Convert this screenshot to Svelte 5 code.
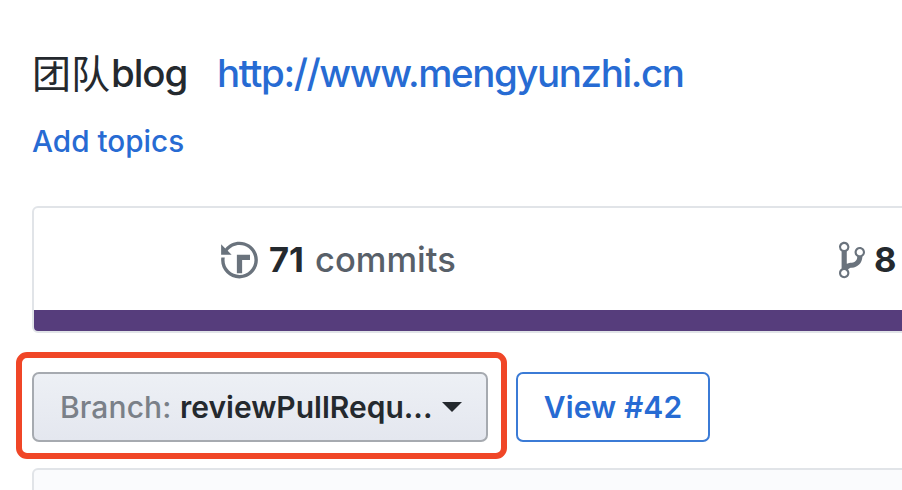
<script>
  const stats = { commits: 71, branches: 8 };
  const branch = 'reviewPullRequ...';
</script>

<main>
  <header>
    <h1><span class="cjk">团队</span><span class="blog">blog</span></h1>
    <a class="site" href="#site">http://www.mengyunzhi.cn</a>
  </header>
  <a class="topics" href="#topics">Add topics</a>

  <section class="summary">
    <div class="stats">
      <div class="commits">
        <svg width="37" height="42" viewBox="0 0 14 16" aria-hidden="true">
          <path d="M8 13H6V6h5v2H8v5zM7 1C4.81 1 2.87 2.02 1.59 3.59L0 2v4h4L2.5 4.5C3.55 3.17 5.17 2.3 7 2.3c3.14 0 5.7 2.56 5.7 5.7s-2.56 5.7-5.7 5.7A5.71 5.71 0 0 1 1.3 8c0-.34.03-.67.09-1H.08C.03 7.33 0 7.66 0 8c0 3.86 3.14 7 7 7s7-3.14 7-7-3.14-7-7-7z" />
        </svg>
        <strong>{stats.commits}</strong>
        <span>commits</span>
      </div>
      <div class="branches">
        <svg width="26" height="42" viewBox="0 0 10 16" aria-hidden="true">
          <path d="M10 5c0-1.11-.89-2-2-2a1.993 1.993 0 0 0-1 3.72v.3c-.02.52-.23.98-.63 1.38-.4.4-.86.61-1.38.63-.83.02-1.48.16-2 .45V4.72a1.993 1.993 0 0 0-1-3.72C.88 1 0 1.89 0 3a2 2 0 0 0 1 1.72v6.56c-.59.35-1 .99-1 1.72 0 1.11.89 2 2 2 1.11 0 2-.89 2-2 0-.53-.2-1-.53-1.36.09-.06.48-.41.59-.47.25-.11.56-.17.94-.17 1.05-.05 1.95-.45 2.75-1.25S8.95 7.77 9 6.73h-.02C9.59 6.37 10 5.73 10 5zM2 1.8c.66 0 1.2.55 1.2 1.2 0 .65-.55 1.2-1.2 1.2C1.35 4.2.8 3.65.8 3c0-.65.55-1.2 1.2-1.2zm0 12.41c-.66 0-1.2-.55-1.2-1.2 0-.65.55-1.2 1.2-1.2.65 0 1.2.55 1.2 1.2 0 .65-.55 1.2-1.2 1.2zm6-8c-.66 0-1.2-.55-1.2-1.2 0-.65.55-1.2 1.2-1.2.65 0 1.2.55 1.2 1.2 0 .65-.55 1.2-1.2 1.2z" />
        </svg>
        <strong>{stats.branches}</strong>
      </div>
    </div>
    <div class="language"></div>
  </section>

  <nav>
    <div class="highlight">
      <button class="select">
        <span class="label">Branch:</span>
        <span class="name">{branch}</span>
        <span class="caret"></span>
      </button>
    </div>
    <button class="view">View #42</button>
  </nav>

  <div class="files"></div>
</main>

<style>
  :global(body) {
    background: #fff;
    overflow: hidden;
  }
  main {
    width: 902px;
    height: 490px;
    overflow: hidden;
    box-sizing: border-box;
    padding: 48px 0 0 32px;
    font-family: Inter, "Noto Sans CJK SC", sans-serif;
    color: #24292e;
    white-space: nowrap;
  }
  a {
    color: #276bd3;
    text-decoration: none;
  }
  header {
    display: flex;
    height: 50px;
    line-height: 50px;
    font-size: 38.5px;
    font-weight: 450;
  }
  h1 {
    display: flex;
    width: 185px;
    margin: 0;
    font-size: inherit;
    font-weight: inherit;
  }
  .cjk {
    width: 79px;
    font-family: "Noto Sans CJK SC", sans-serif;
    font-size: 39px;
    font-weight: 400;
    line-height: 46px;
  }
  .blog {
    letter-spacing: -1.1px;
  }
  .site {
    letter-spacing: -1.42px;
  }
  .topics {
    display: block;
    width: max-content;
    margin-top: 23px;
    height: 40px;
    line-height: 40px;
    font-size: 29.7px;
    font-weight: 450;
  }
  .summary {
    width: 900px;
    height: 127px;
    box-sizing: border-box;
    margin-top: 45px;
    border: 2px solid #e1e4e8;
    border-radius: 6px;
    overflow: hidden;
  }
  .stats {
    display: flex;
    height: 102px;
    align-items: center;
    font-size: 34.5px;
  }
  .stats svg {
    flex: none;
    margin-top: 2px;
    fill: #6a737d;
  }
  .stats strong {
    font-weight: 650;
  }
  .commits,
  .branches {
    display: flex;
    align-items: center;
  }
  .commits {
    width: 618px;
    padding-left: 187px;
    box-sizing: border-box;
  }
  .commits strong {
    width: 46px;
    margin-left: 11px;
  }
  .commits span {
    color: #586069;
    font-weight: 450;
  }
  .branches {
    padding-left: 187px;
  }
  .branches strong {
    margin-left: 9px;
  }
  .language {
    height: 22px;
    background: #563d7c;
  }
  nav {
    display: flex;
    align-items: flex-start;
    margin: 19px 0 0 -16px;
  }
  .highlight {
    box-sizing: border-box;
    width: 491px;
    height: 107px;
    padding: 14px 10px;
    border: 6px solid #f04627;
    border-radius: 11px;
  }
  button {
    box-sizing: border-box;
    height: 70px;
    padding: 0;
    border-radius: 7px;
    font: 600 30px Inter, sans-serif;
    white-space: nowrap;
  }
  .select {
    display: flex;
    align-items: center;
    width: 456px;
    padding-left: 26px;
    border: 2px solid #a6aab0;
    background: linear-gradient(#edf0f5, #e4e7ef);
    color: #24292e;
    text-align: left;
  }
  .label {
    width: 120px;
    color: #7a8088;
    font-weight: 450;
    letter-spacing: 0.1px;
  }
  .name {
    width: 262px;
  }
  .caret {
    border: 10px solid transparent;
    border-top-color: #24292e;
    border-bottom: 0;
  }
  .view {
    width: 194px;
    margin: 20px 0 0 9px;
    border: 2px solid #3b7bd6;
    background: #fff;
    color: #276bd3;
    letter-spacing: 0.1px;
  }
  .files {
    width: 900px;
    height: 60px;
    margin-top: 9px;
    border: 2px solid #e1e4e8;
    border-radius: 6px;
    background: #fafbfd;
  }
</style>
